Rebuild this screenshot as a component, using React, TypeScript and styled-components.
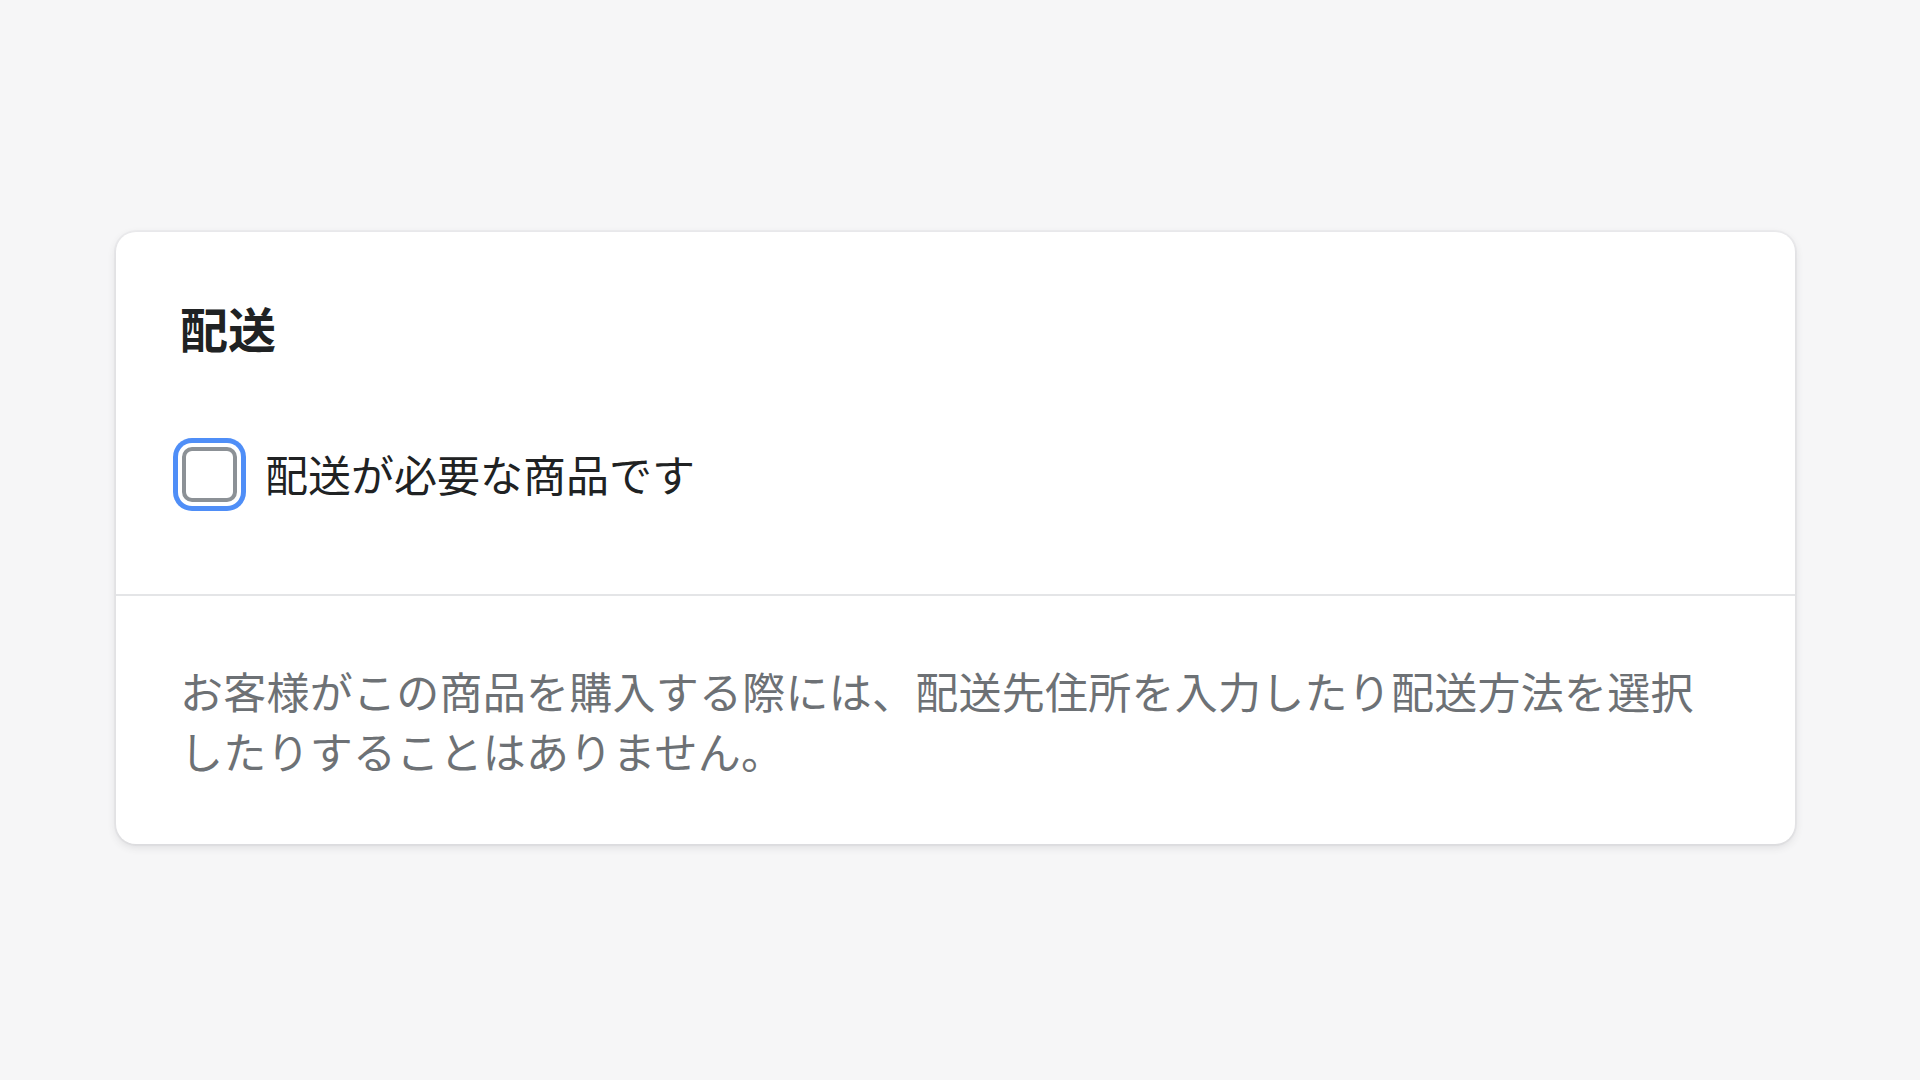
import React from "react";
import styled, { createGlobalStyle } from "styled-components";

const GlobalStyle = createGlobalStyle`
  html, body {
    margin: 0;
    padding: 0;
    background-color: #f6f6f7;
    font-family: "Noto Sans CJK JP", "Noto Sans", sans-serif;
    color: #202223;
  }
`;

const Page = styled.main`
  min-height: 1080px;
  box-sizing: border-box;
  padding: 232px 125px 0 116px;
`;

const Card = styled.section`
  background-color: #ffffff;
  border-radius: 20px;
  box-shadow: 0 0 0 2px rgba(63, 63, 68, 0.04), 0 3px 8px rgba(63, 63, 68, 0.14);
  overflow: hidden;
`;

const Section = styled.div<{ $divided?: boolean }>`
  padding: 60px 64px 90px;
  border-top: ${(p) => (p.$divided ? "2px solid #e4e5e7" : "none")};

  & + & {
    padding: 64px 64px 64px;
  }
`;

const Title = styled.h2`
  margin: 0 0 82px;
  font-size: 48px;
  line-height: 70px;
  font-weight: 700;
  color: #202223;
`;

const CheckRow = styled.label`
  display: flex;
  align-items: center;
  gap: 28px;
  height: 60px;
  cursor: pointer;
`;

const Box = styled.input`
  appearance: none;
  margin: 0 0 0 2px;
  width: 55px;
  height: 55px;
  box-sizing: border-box;
  border: 4px solid #8c9196;
  border-radius: 10px;
  background: #ffffff;
  box-shadow: 0 0 0 4px #ffffff, 0 0 0 9px #4f8ef7;
  outline: none;
  flex-shrink: 0;
`;

const LabelText = styled.span`
  font-size: 43px;
  line-height: 60px;
  margin-top: -3px;
  color: #202223;
`;

const Help = styled.p`
  margin: 0;
  font-size: 43px;
  letter-spacing: 0.25px;
  line-height: 60px;
  white-space: nowrap;
  color: #6d7175;
`;

export default function App() {
  return (
    <>
      <GlobalStyle />
      <Page>
        <Card>
          <Section>
            <Title>配送</Title>
            <CheckRow>
              <Box type="checkbox" />
              <LabelText>配送が必要な商品です</LabelText>
            </CheckRow>
          </Section>
          <Section $divided>
            <Help>
              お客様がこの商品を購入する際には、配送先住所を入力したり配送方法を選択
              <br />
              したりすることはありません。
            </Help>
          </Section>
        </Card>
      </Page>
    </>
  );
}
